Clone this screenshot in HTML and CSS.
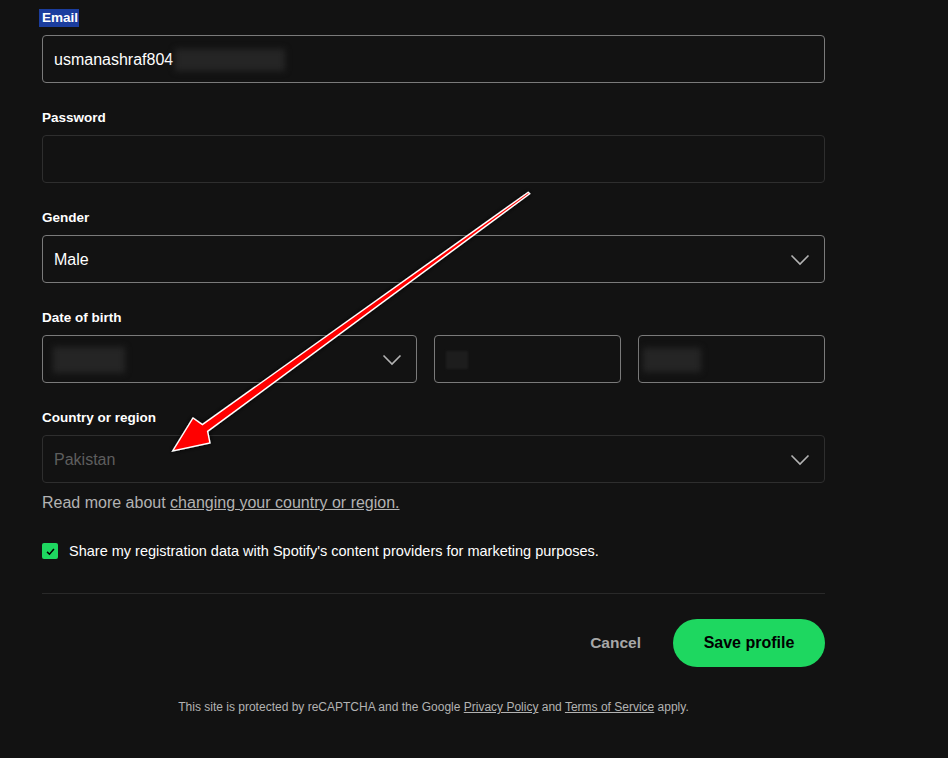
FILE: index.html
```html
<!DOCTYPE html>
<html lang="en">
<head>
<meta charset="utf-8">
<title>Edit profile</title>
<link rel="stylesheet" href="styles.css">
</head>
<body>
<main class="page">
  <form class="form">
    <div class="field">
      <label class="label"><span class="selected">Email</span></label>
      <div class="input"><span class="value">usmanashraf804</span><span class="blur blur-email"></span></div>
    </div>
    <div class="field">
      <label class="label">Password</label>
      <div class="input disabled"></div>
    </div>
    <div class="field">
      <label class="label">Gender</label>
      <div class="input select"><span class="value">Male</span>
        <svg class="chev" viewBox="0 0 20 12" width="20" height="12"><path d="M1.5 1.5 L10 10 L18.5 1.5" fill="none" stroke="#b3b3b3" stroke-width="1.6"/></svg>
      </div>
    </div>
    <div class="field">
      <label class="label">Date of birth</label>
      <div class="dob">
        <div class="input select"><span class="blur blur-day"></span>
          <svg class="chev" viewBox="0 0 20 12" width="20" height="12"><path d="M1.5 1.5 L10 10 L18.5 1.5" fill="none" stroke="#b3b3b3" stroke-width="1.6"/></svg>
        </div>
        <div class="input"><span class="blur blur-mon"></span></div>
        <div class="input"><span class="blur blur-year"></span></div>
      </div>
    </div>
    <div class="field last">
      <label class="label">Country or region</label>
      <div class="input select disabled"><span class="value muted">Pakistan</span>
        <svg class="chev" viewBox="0 0 20 12" width="20" height="12"><path d="M1.5 1.5 L10 10 L18.5 1.5" fill="none" stroke="#b3b3b3" stroke-width="1.6"/></svg>
      </div>
      <p class="help">Read more about <a href="#">changing your country or region.</a></p>
    </div>
    <div class="check-row">
      <span class="checkbox"><svg viewBox="0 0 16 16" width="11" height="11"><path d="M3 8.5 L6.5 12 L13 4.5" fill="none" stroke="#000" stroke-width="2.2"/></svg></span>
      <span class="check-text">Share my registration data with Spotify's content providers for marketing purposes.</span>
    </div>
    <hr class="divider">
    <div class="actions">
      <button type="button" class="cancel">Cancel</button>
      <button type="button" class="save">Save profile</button>
    </div>
    <p class="legal">This site is protected by reCAPTCHA and the Google <a href="#">Privacy Policy</a> and <a href="#">Terms of Service</a> apply.</p>
  </form>
  <svg class="arrow" width="948" height="758" viewBox="0 0 948 758">
    <defs>
      <filter id="sh" x="-10%" y="-10%" width="120%" height="120%">
        <feDropShadow dx="0" dy="0" stdDeviation="2.5" flood-color="#000" flood-opacity="0.9"/>
      </filter>
    </defs>
    <polygon filter="url(#sh)" points="528.3,192.3 202.4,424.6 193,418 172.7,451 210,443 207.6,431.4 529.7,193.7" fill="#ff0000" stroke="#ffffff" stroke-width="1.4" stroke-linejoin="miter"/>
  </svg>
</main>
</body>
</html>
```
FILE: styles.css
```css
html, body {
  margin: 0;
  padding: 0;
  background: #121212;
}
body {
  font-family: "Liberation Sans", Arial, sans-serif;
  color: #fff;
  width: 948px;
  height: 758px;
  overflow: hidden;
}
.page {
  position: relative;
  width: 948px;
  height: 758px;
}
.form {
  width: 783px;
  padding: 8px 0 0 42px;
  display: flex;
  flex-direction: column;
}
.field {
  display: flex;
  flex-direction: column;
  margin-bottom: 25px;
}
.field.last { margin-bottom: 0; }
.label {
  font-size: 13.5px;
  font-weight: 700;
  line-height: 19px;
  height: 19px;
  margin-bottom: 8px;
  color: #fff;
}
.selected {
  background: #1b3d9e;
  display: inline-block;
  line-height: 18px;
  margin-top: -1px;
  padding: 0 1px 0 3px;
  margin-left: -3px;
}
.input {
  position: relative;
  box-sizing: border-box;
  height: 48px;
  border: 1px solid #7a7a7a;
  border-radius: 4px;
  display: flex;
  align-items: center;
  padding: 1px 11px 0;
  background: #121212;
}
.input.disabled { border-color: #2e2e2e; }
.value {
  font-size: 16px;
  color: #fff;
}
.value.muted { color: #5e5e5e; }
.select { justify-content: space-between; }
.chev { margin-right: 3px; }
.blur {
  display: block;
  background: #252525;
  filter: blur(3px);
}
.blur-email { width: 110px; height: 22px; margin-left: 2px; }
.blur-day { width: 72px; height: 26px; margin-left: -1px; }
.blur-mon { width: 22px; height: 18px; margin-left: 0; background: #1d1d1d; filter: blur(1px); }
.blur-year { width: 58px; height: 24px; margin-left: -7px; }
.dob {
  display: grid;
  grid-template-columns: 375px 187px 187px;
  column-gap: 17px;
}
.help {
  margin: 8px 0 0;
  font-size: 16px;
  line-height: 24px;
  color: #b3b3b3;
}
.help a { color: #b3b3b3; text-decoration: underline; }
.check-row {
  display: flex;
  align-items: center;
  margin-top: 27px;
  height: 18px;
}
.checkbox {
  width: 16px;
  height: 16px;
  background: #1ed760;
  border-radius: 2px;
  display: flex;
  align-items: center;
  justify-content: center;
  margin-right: 11px;
}
.check-text {
  font-size: 14.5px;
  color: #fff;
}
.divider {
  border: 0;
  height: 1px;
  background: #292929;
  margin: 33px 0 0;
  width: 783px;
}
.actions {
  display: flex;
  justify-content: flex-end;
  align-items: center;
  margin-top: 25px;
}
.cancel {
  background: none;
  border: 0;
  color: #a7a7a7;
  font-family: inherit;
  font-weight: 700;
  font-size: 15.5px;
  padding: 0;
  margin-right: 32px;
}
.save {
  background: #1ed760;
  border: 0;
  border-radius: 24px;
  height: 48px;
  width: 152px;
  color: #000;
  font-family: inherit;
  font-weight: 700;
  font-size: 16px;
}
.legal {
  margin: 33px 0 0;
  text-align: center;
  font-size: 12px;
  color: #b3b3b3;
}
.legal a { color: #b3b3b3; }
.arrow {
  position: absolute;
  left: 0;
  top: 0;
  pointer-events: none;
}
```
